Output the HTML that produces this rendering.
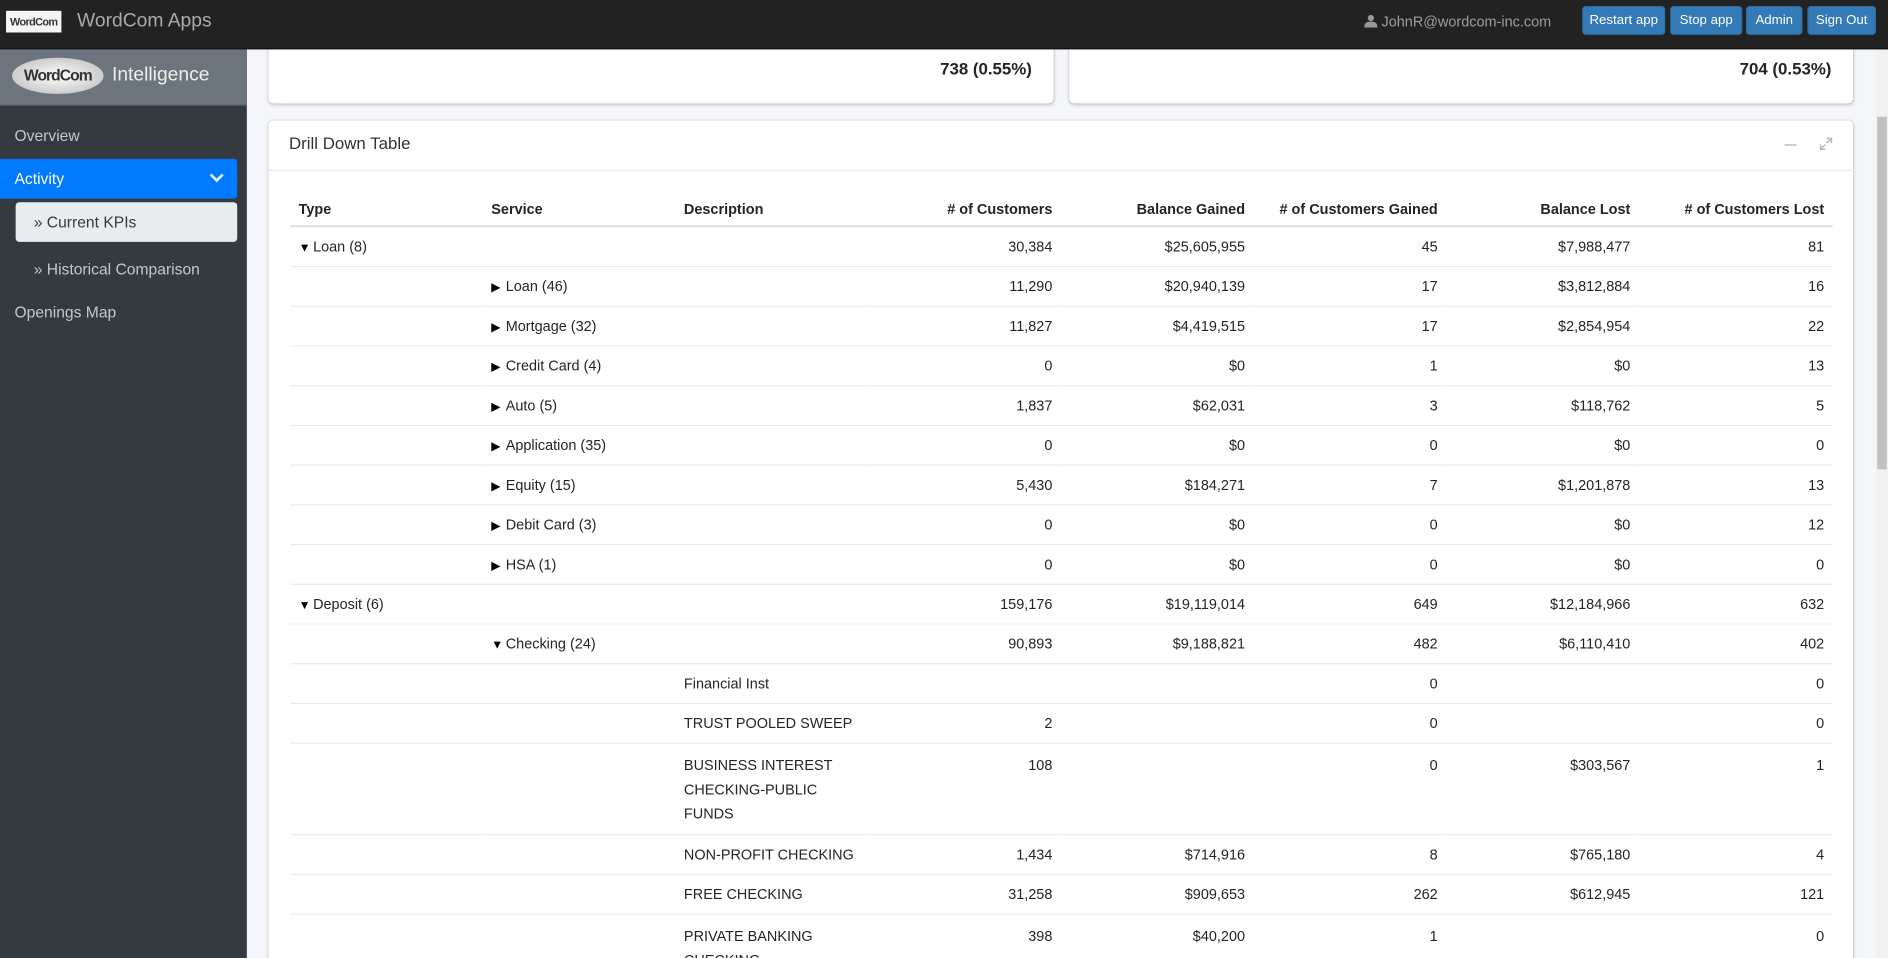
<!DOCTYPE html>
<html><head><meta charset="utf-8">
<style>
html,body{margin:0;padding:0;width:1888px;height:958px;overflow:hidden;background:#f4f6f9;}
#w{width:1568px;height:796px;transform:scale(1.2041,1.2035);transform-origin:0 0;position:relative;font-family:"Liberation Sans",sans-serif;color:#212529;}
.top{position:absolute;left:0;top:0;width:1568px;height:40px;background:#222;border-bottom:1px solid #111;z-index:5}
.lg{position:absolute;left:5px;top:9px;width:46px;height:18px;background:#f4f4f4;font:bold 9px "Liberation Sans",sans-serif;color:#333;text-align:center;line-height:18px;letter-spacing:-0.5px}
.apps{position:absolute;left:64px;top:9px;font-size:16px;color:#aaa;}
.user{position:absolute;left:1133px;top:11px;font-size:12px;color:#9d9d9d;}
.btn{position:absolute;top:5px;height:24px;background:#337ab7;border:1px solid #2e6da4;border-radius:3px;color:#fff;font-size:11px;line-height:22px;text-align:center;box-sizing:border-box;}
.side{position:absolute;left:0;top:41px;width:205px;height:755px;background:#343a40;z-index:4}
.sh{height:46px;background:#6c757d;position:relative;border-bottom:1px solid #4b545c}
.oval{position:absolute;left:10px;top:7px;width:76px;height:30px;border-radius:50%;background:radial-gradient(#fff,#ccc 70%,#999);font:bold 13px "Liberation Sans",sans-serif;color:#333;text-align:center;line-height:30px;letter-spacing:-0.8px}
.intel{position:absolute;left:93px;top:13px;font-size:16px;color:#eee;}
.nav{position:absolute;left:12px;font-size:13px;color:#c2c7d0;}
.act{position:absolute;left:0;top:91px;width:197px;height:33px;background:#007bff;border-radius:0 3px 3px 0;color:#fff;font-size:13px;line-height:33px;}
.kpi{position:absolute;left:13px;top:127px;width:184px;height:33px;background:#e9ecef;border-radius:3px;color:#343a40;font-size:13px;line-height:33px;}
.card{position:absolute;background:#fff;border-radius:4px;box-shadow:0 0 1px rgba(0,0,0,.15),0 1px 3px rgba(0,0,0,.2);}
.val{position:absolute;font-weight:bold;font-size:14px;}
.sb{position:absolute;left:1558px;top:41px;width:10px;height:755px;background:#f1f1f1}
.th{position:absolute;left:1px;top:56px;width:8px;height:293px;background:#c1c1c1}
table{position:absolute;left:18px;top:60px;border-collapse:collapse;font-size:12px;table-layout:fixed;width:1281px;}
td,th{padding:0 7px;height:32px;border-top:1px solid #e9ecef;vertical-align:middle;white-space:nowrap;}
th{border-top:none;border-bottom:2px solid #dee2e6;height:27px;text-align:left;font-size:12px;}
.r{text-align:right}
td.m{padding-top:8px;padding-bottom:7px;line-height:20px;vertical-align:top;height:auto}
.tri{font-size:10px;display:inline-block;width:12px;color:#000}
</style></head><body><div id="w">
<div class="top">
<div class="lg">WordCom</div>
<div class="apps">WordCom Apps</div>
<div class="user"><svg width="11" height="11" viewBox="0 0 11 11" style="vertical-align:-1px"><circle cx="5.5" cy="3" r="2.6" fill="#999"/><path d="M0 11c0-4 2-5 5.5-5S11 7 11 11z" fill="#999"/></svg> JohnR@wordcom-inc.com</div>
<div class="btn" style="left:1314px;width:69px">Restart app</div>
<div class="btn" style="left:1387px;width:60px">Stop app</div>
<div class="btn" style="left:1450px;width:47px">Admin</div>
<div class="btn" style="left:1501px;width:57px">Sign Out</div>
</div>
<div class="side">
<div class="sh"><div class="oval">WordCom</div><div class="intel">Intelligence</div></div>
<div class="nav" style="top:64px">Overview</div>
<div class="act"><span style="margin-left:12px">Activity</span><svg style="position:absolute;left:174px;top:12px" width="12" height="8" viewBox="0 0 12 8"><path d="M1 1l5 5 5-5" stroke="#fff" stroke-width="2" fill="none"/></svg></div>
<div class="kpi"><span style="margin-left:15px">&raquo; Current KPIs</span></div>
<div class="nav" style="top:175px;left:28px">&raquo; Historical Comparison</div>
<div class="nav" style="top:211px">Openings Map</div>
</div>
<div class="card" style="left:223px;top:20px;width:652px;height:66px"><div class="val" style="right:18px;top:29px">738 (0.55%)</div></div>
<div class="card" style="left:888px;top:20px;width:651px;height:66px"><div class="val" style="right:18px;top:29px">704 (0.53%)</div></div>
<div class="card" style="left:223px;top:100px;width:1316px;height:720px">
<div style="height:41px;border-bottom:1px solid #e5e7ea;position:relative"><div style="position:absolute;left:17px;top:11px;font-size:14px;color:#333">Drill Down Table</div>
<div style="position:absolute;left:1259px;top:20px;width:10px;height:1px;background:#aaa"></div>
<svg style="position:absolute;left:1288px;top:14px" width="11" height="11" viewBox="0 0 11 11"><path d="M6 1h4v4M10 1L6 5M5 10H1V6M1 10l4-4" stroke="#bbb" stroke-width="1.3" fill="none"/></svg></div>
<table>
<colgroup><col style="width:160px"><col style="width:160px"><col style="width:160px"><col style="width:160px"><col style="width:160px"><col style="width:160px"><col style="width:160px"><col style="width:161px"></colgroup>
<tr><th>Type</th><th>Service</th><th>Description</th><th class="r"># of Customers</th><th class="r">Balance Gained</th><th class="r"># of Customers Gained</th><th class="r">Balance Lost</th><th class="r"># of Customers Lost</th></tr>
<tr><td><span class="tri">&#9660;</span>Loan (8)</td><td></td><td></td><td class="r">30,384</td><td class="r">$25,605,955</td><td class="r">45</td><td class="r">$7,988,477</td><td class="r">81</td></tr>
<tr><td></td><td><span class="tri">&#9654;</span>Loan (46)</td><td></td><td class="r">11,290</td><td class="r">$20,940,139</td><td class="r">17</td><td class="r">$3,812,884</td><td class="r">16</td></tr>
<tr><td></td><td><span class="tri">&#9654;</span>Mortgage (32)</td><td></td><td class="r">11,827</td><td class="r">$4,419,515</td><td class="r">17</td><td class="r">$2,854,954</td><td class="r">22</td></tr>
<tr><td></td><td><span class="tri">&#9654;</span>Credit Card (4)</td><td></td><td class="r">0</td><td class="r">$0</td><td class="r">1</td><td class="r">$0</td><td class="r">13</td></tr>
<tr><td></td><td><span class="tri">&#9654;</span>Auto (5)</td><td></td><td class="r">1,837</td><td class="r">$62,031</td><td class="r">3</td><td class="r">$118,762</td><td class="r">5</td></tr>
<tr><td></td><td><span class="tri">&#9654;</span>Application (35)</td><td></td><td class="r">0</td><td class="r">$0</td><td class="r">0</td><td class="r">$0</td><td class="r">0</td></tr>
<tr><td></td><td><span class="tri">&#9654;</span>Equity (15)</td><td></td><td class="r">5,430</td><td class="r">$184,271</td><td class="r">7</td><td class="r">$1,201,878</td><td class="r">13</td></tr>
<tr><td></td><td><span class="tri">&#9654;</span>Debit Card (3)</td><td></td><td class="r">0</td><td class="r">$0</td><td class="r">0</td><td class="r">$0</td><td class="r">12</td></tr>
<tr><td></td><td><span class="tri">&#9654;</span>HSA (1)</td><td></td><td class="r">0</td><td class="r">$0</td><td class="r">0</td><td class="r">$0</td><td class="r">0</td></tr>
<tr><td><span class="tri">&#9660;</span>Deposit (6)</td><td></td><td></td><td class="r">159,176</td><td class="r">$19,119,014</td><td class="r">649</td><td class="r">$12,184,966</td><td class="r">632</td></tr>
<tr><td></td><td><span class="tri">&#9660;</span>Checking (24)</td><td></td><td class="r">90,893</td><td class="r">$9,188,821</td><td class="r">482</td><td class="r">$6,110,410</td><td class="r">402</td></tr>
<tr><td></td><td></td><td>Financial Inst</td><td></td><td></td><td class="r">0</td><td></td><td class="r">0</td></tr>
<tr><td></td><td></td><td>TRUST POOLED SWEEP</td><td class="r">2</td><td></td><td class="r">0</td><td></td><td class="r">0</td></tr>
<tr><td class="m"></td><td class="m"></td><td class="m">BUSINESS INTEREST<br>CHECKING-PUBLIC<br>FUNDS</td><td class="m r">108</td><td class="m"></td><td class="m r">0</td><td class="m r">$303,567</td><td class="m r">1</td></tr>
<tr><td></td><td></td><td>NON-PROFIT CHECKING</td><td class="r">1,434</td><td class="r">$714,916</td><td class="r">8</td><td class="r">$765,180</td><td class="r">4</td></tr>
<tr><td></td><td></td><td>FREE CHECKING</td><td class="r">31,258</td><td class="r">$909,653</td><td class="r">262</td><td class="r">$612,945</td><td class="r">121</td></tr>
<tr><td class="m"></td><td class="m"></td><td class="m">PRIVATE BANKING<br>CHECKING</td><td class="m r">398</td><td class="m r">$40,200</td><td class="m r">1</td><td class="m"></td><td class="m r">0</td></tr>
</table>
</div>
<div class="sb"><div class="th"></div></div>
</div></body></html>
